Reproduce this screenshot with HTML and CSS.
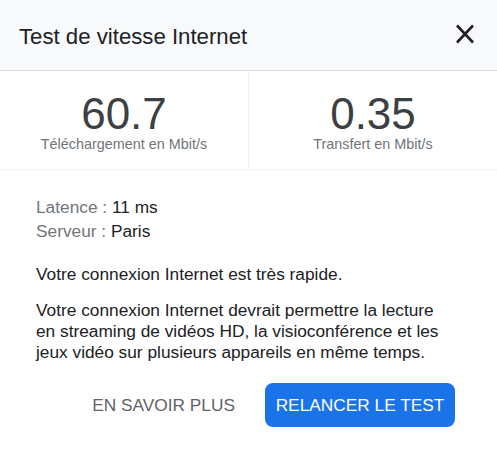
FILE: index.html
```html
<!DOCTYPE html>
<html lang="fr">
<head>
<meta charset="utf-8">
<title>Test de vitesse Internet</title>
<link rel="stylesheet" href="styles.css">
</head>
<body>
<div class="dialog">
  <header class="header">
    <h1 class="title">Test de vitesse Internet</h1>
    <button class="close" aria-label="Fermer">
      <svg width="24" height="24" viewBox="0 0 24 24"><path d="M4 3.5L20 20.5M20 3.5L4 20.5" stroke="#202124" stroke-width="2.6" fill="none"/></svg>
    </button>
  </header>
  <section class="stats">
    <div class="stat">
      <div class="value">60.7</div>
      <div class="label">Téléchargement en Mbit/s</div>
    </div>
    <div class="stat stat-right">
      <div class="value">0.35</div>
      <div class="label">Transfert en Mbit/s</div>
    </div>
  </section>
  <section class="content">
    <div class="meta">
      <div class="meta-row"><span class="meta-key">Latence : </span><span class="meta-val">11 ms</span></div>
      <div class="meta-row"><span class="meta-key">Serveur : </span><span class="meta-val">Paris</span></div>
    </div>
    <p class="text first">Votre connexion Internet est très rapide.</p>
    <p class="text">Votre connexion Internet devrait permettre la lecture en streaming de vidéos HD, la visioconférence et les jeux vidéo sur plusieurs appareils en même temps.</p>
    <div class="actions">
      <button class="btn btn-text">EN SAVOIR PLUS</button>
      <button class="btn btn-primary">RELANCER LE TEST</button>
    </div>
  </section>
</div>
</body>
</html>
```
FILE: styles.css
```css
* { box-sizing: border-box; }
html, body { margin: 0; padding: 0; background: #fff; }
body {
  font-family: "Liberation Sans", Arial, sans-serif;
  color: #202124;
  width: 497px;
  height: 450px;
  overflow: hidden;
}
.header {
  height: 71px;
  background: #f8f9fa;
  border-bottom: 1px solid #dadce0;
  display: flex;
  justify-content: space-between;
  align-items: flex-start;
  padding: 24px 20px 0 19px;
}
.title {
  margin: 0;
  font-size: 22.2px;
  font-weight: normal;
  line-height: 25.5px;
  color: #202124;
}
.close {
  border: 0;
  background: none;
  padding: 0;
  margin-top: -2.5px;
  width: 24px;
  height: 24px;
  display: block;
  cursor: pointer;
}
.close svg { display: block; }
.stats {
  display: grid;
  grid-template-columns: 248px 1fr;
  border-bottom: 1px solid #f1f3f4;
}
.stat {
  padding: 22.5px 0 15.5px;
  text-align: center;
}
.stat-right { border-left: 1px solid #f1f3f4; }
.value {
  font-size: 44px;
  line-height: 40px;
  color: #3c4043;
}
.label {
  font-size: 14.4px;
  line-height: 20px;
  color: #70757a;
}
.content {
  padding: 25px 42px 0 36px;
  font-size: 17.3px;
}
.meta-row { line-height: 24px; }
.meta-key { color: #70757a; }
.meta-val { color: #202124; }
.text {
  margin: 0;
  line-height: 20.7px;
  color: #202124;
}
.text.first { margin-top: 20.7px; margin-bottom: 16px; }
.actions {
  display: flex;
  justify-content: flex-end;
  align-items: center;
  gap: 19px;
  margin-top: 20.7px;
}
.btn {
  font-family: "Liberation Sans", Arial, sans-serif;
  font-size: 17.3px;
  border: 0;
  height: 44px;
  padding: 0 11px;
  border-radius: 8px;
  white-space: nowrap;
  cursor: pointer;
}
.btn-text {
  background: none;
  color: #5f6368;
}
.btn-primary {
  background: #1a73e8;
  color: #fff;
  width: 190px;
  padding: 0;
}
```
